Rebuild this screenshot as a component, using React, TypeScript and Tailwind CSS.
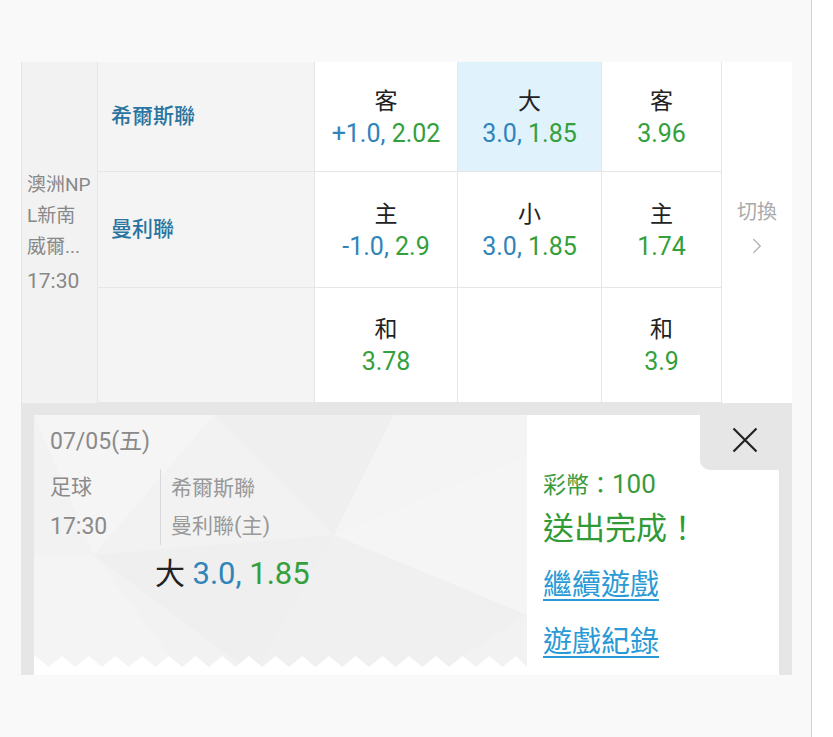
import React from "react";
import { ChevronRight } from "lucide-react";

const B = "text-[#2f84ba]";
const G = "text-[#34a03c]";

function Odd({
  label,
  blue,
  green,
  hl,
}: {
  label?: string;
  blue?: string;
  green?: string;
  hl?: boolean;
}) {
  return (
    <div
      className={`flex flex-col items-center justify-center border-r border-b border-[#e6e6e6] pt-[2px] ${
        hl ? "bg-[#e0f2fc]" : "bg-white"
      }`}
    >
      {label && (
        <>
          <div className="text-[23px] leading-[32px] text-[#222]">{label}</div>
          <div className="text-[25px] leading-[32px]">
            {blue && <span className={B}>{blue} </span>}
            <span className={G}>{green}</span>
          </div>
        </>
      )}
    </div>
  );
}

function Team({ name }: { name?: string }) {
  return (
    <div className="flex items-center border-r border-b border-[#e6e6e6] bg-[#f4f4f4] pl-[13px] text-[21px] font-medium text-[#2a74a0]">
      {name}
    </div>
  );
}

function TicketBg() {
  return (
    <svg className="absolute inset-0" width="493" height="260" viewBox="0 0 493 260">
      <rect width="493" height="260" fill="#f2f2f2" />
      <polygon points="0,0 180,0 60,140" fill="#f5f5f5" />
      <polygon points="180,0 360,0 300,120" fill="#efefef" />
      <polygon points="300,120 493,40 493,200" fill="#f5f5f5" />
      <polygon points="60,140 300,120 220,260" fill="#efefef" />
      <polygon points="360,0 493,0 493,40 300,120" fill="#f4f4f4" />
      <polygon points="0,140 60,140 150,260 0,260" fill="#f4f4f4" />
      <polygon points="300,120 493,200 400,260 220,260" fill="#f0f0f0" />
    </svg>
  );
}

function Zigzag() {
  const period = 26.7;
  let d = "M0,19 L0,10";
  let x = 1.3;
  while (x - period / 2 < 493) {
    d += ` L${(x - period / 2).toFixed(1)},11 L${x.toFixed(1)},0`;
    x += period;
  }
  d += " L493,11 L493,19 Z";
  return (
    <svg className="absolute bottom-0 left-0" width="493" height="19" viewBox="0 0 493 19">
      <path d={d} fill="#ffffff" />
    </svg>
  );
}

export default function App() {
  return (
    <div className="flex h-[737px] w-[833px] bg-white font-[Roboto,'Noto_Sans_CJK_TC',sans-serif]">
      <div className="h-full w-[812px] border-r border-[#d4d4d4] bg-[#f9f9f9] pl-[21px] pt-[62px]">
        <div className="w-[771px]">
          <div className="grid grid-cols-[77px_217px_143px_144px_120px_70px] grid-rows-[110px_116px_115px]">
            <div className="row-span-3 flex flex-col justify-center border-l border-r border-[#e6e6e6] bg-[#f2f2f2] pl-[5px] text-[19px] leading-[31px] text-[#888]">
              <div>澳洲NP</div>
              <div>L新南</div>
              <div>威爾...</div>
              <div className="mt-[4px] text-[21px]">17:30</div>
            </div>
            <Team name="希爾斯聯" />
            <Odd label="客" blue="+1.0," green="2.02" />
            <Odd label="大" blue="3.0," green="1.85" hl />
            <Odd label="客" green="3.96" />
            <div className="row-span-3 flex flex-col items-center justify-center bg-white pb-[8px]">
              <div className="text-[20px] leading-[28px] text-[#aaa]">切換</div>
              <ChevronRight size={26} strokeWidth={1.3} className="mt-[7px] text-[#b5b5b5]" />
            </div>
            <Team name="曼利聯" />
            <Odd label="主" blue="-1.0," green="2.9" />
            <Odd label="小" blue="3.0," green="1.85" />
            <Odd label="主" green="1.74" />
            <Team />
            <Odd label="和" green="3.78" />
            <Odd />
            <Odd label="和" green="3.9" />
          </div>

          <div className="flex h-[272px] bg-[#e6e6e6] px-[13px] pt-[12px]">
            <div className="relative h-[260px] w-[493px] overflow-hidden">
              <TicketBg />
              <Zigzag />
              <div className="relative pl-[16px] pt-[12px] text-[#8a8a8a]">
                <div className="text-[23px] leading-[30px]">07/05(五)</div>
                <div className="mt-[10px] flex">
                  <div className="w-[110px] text-[21px] leading-[40px]">
                    <div>足球</div>
                    <div className="text-[23px]">17:30</div>
                  </div>
                  <div className="my-[2px] border-l border-[#d8d8d8] pl-[10px] text-[21px] leading-[38px] text-[#999]">
                    <div>希爾斯聯</div>
                    <div>
                      曼利聯<span className="text-[22px]">(</span>主<span className="text-[22px]">)</span>
                    </div>
                  </div>
                </div>
                <div className="ml-[105px] mt-[9px] text-[30px] leading-[36px]">
                  <span className="text-[#222]">大 </span>
                  <span className={`${B} text-[31px]`}>3.0, </span>
                  <span className={`${G} text-[31px]`}>1.85</span>
                </div>
              </div>
            </div>
            <div className="relative flex-1 bg-white pl-[16px] pt-[54px]">
              <div className="absolute right-0 top-0 h-[55px] w-[79px] rounded-bl-[10px] bg-[#e6e6e6] pl-[32px] pt-[12px]">
                <svg width="26" height="26" viewBox="0 0 26 26">
                  <path d="M1.5 1.5 L24.5 24.5 M24.5 1.5 L1.5 24.5" stroke="#222" strokeWidth="2.2" fill="none" />
                </svg>
              </div>
              <div className="text-[23px] leading-[30px] text-[#3a9a3e]">
                彩幣：<span className="text-[26px]">100</span>
              </div>
              <div className="mt-[8px] text-[31px] leading-[40px] text-[#2f9a36]">送出完成！</div>
              <div className="mt-[16px] text-[29px] leading-[40px] text-[#2a9ad6] underline decoration-[1.5px] underline-offset-[4px]">
                繼續遊戲
              </div>
              <div className="mt-[17px] text-[29px] leading-[40px] text-[#2a9ad6] underline decoration-[1.5px] underline-offset-[4px]">
                遊戲紀錄
              </div>
            </div>
          </div>
        </div>
      </div>
      <div className="flex-1 bg-white" />
    </div>
  );
}
